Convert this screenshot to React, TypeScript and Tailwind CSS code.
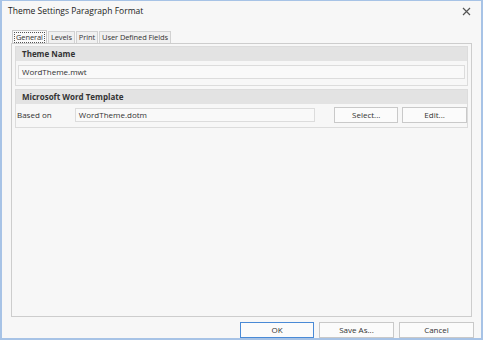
import React from 'react';

const font = { fontFamily: '"Open Sans", "Liberation Sans", sans-serif' };

const GroupHeader: React.FC<{ title: string }> = ({ title }) => (
  <div className="h-[14px] bg-[#e3e3e3] pl-[6px] flex items-center text-[8px] font-bold text-[#333]">{title}</div>
);

const Button: React.FC<{ label: string; primary?: boolean; className?: string }> = ({ label, primary, className }) => (
  <div
    className={`h-[16px] flex items-center justify-center text-[8px] text-[#333] bg-[#fbfbfb] border ${
      primary ? 'border-[#4a8ad6]' : 'border-[#c9c9c9]'
    } ${className ?? ''}`}
  >
    {label}
  </div>
);

export default function App() {
  return (
    <div className="w-[483px] h-[342px] bg-white overflow-hidden" style={font}>
      <div className="w-[483px] h-[340px] bg-[#f7f7f7] border-x-2 border-b-2 border-t border-[#a7c3e6] flex flex-col">
        {/* Title bar */}
        <div className="h-[21px] flex items-center justify-between pl-[6px] pr-[10px]">
          <span className="text-[8.5px] text-[#222]">Theme Settings Paragraph Format</span>
          <svg width="9" height="9" viewBox="0 0 9 9" className="stroke-[#555]">
            <path d="M1 1L8 8M8 1L1 8" strokeWidth="1.2" />
          </svg>
        </div>

        {/* Tabs */}
        <div className="flex ml-[10px] mt-[8px] h-[13px] items-end text-[7.5px] text-[#333] tracking-[-0.1px]">
          <div className="h-[13px] px-[1px] border border-b-0 border-[#c8c8c8] bg-[#fafafa] flex items-center">
            <span className="border border-dotted border-[#555] px-[1px] leading-[9px]">General</span>
          </div>
          <div className="h-[12px] ml-[1px] px-[2px] border border-b-0 border-[#d2d2d2] bg-[#f0f0f0] flex items-center">Levels</div>
          <div className="h-[12px] ml-[1px] px-[2px] border border-b-0 border-[#d2d2d2] bg-[#f0f0f0] flex items-center">Print</div>
          <div className="h-[12px] ml-[1px] px-[2px] border border-b-0 border-[#d2d2d2] bg-[#f0f0f0] flex items-center">User Defined Fields</div>
        </div>

        {/* Tab panel */}
        <div className="mx-[9px] h-[274px] border border-[#cdcdcd] bg-[#f7f7f7] px-[3px] pt-[2px] flex flex-col gap-[3px]">
          <div className="border border-[#dcdcdc] pb-[6px]">
            <GroupHeader title="Theme Name" />
            <div className="mx-[2px] mt-[4px] h-[14px] border border-[#dcdcdc] bg-[#f9f9f9] pl-[3px] flex items-center text-[8px] text-[#333]">
              WordTheme.mwt
            </div>
          </div>
          <div className="border border-[#dcdcdc] pb-[4px]">
            <GroupHeader title="Microsoft Word Template" />
            <div className="flex items-center mt-[3px] text-[8px] text-[#333]">
              <span className="w-[59px] pl-[1px]">Based on</span>
              <div className="w-[241px] h-[14px] border border-[#dcdcdc] bg-[#f9f9f9] pl-[3px] flex items-center">WordTheme.dotm</div>
              <Button label="Select..." className="w-[64px] ml-[19px]" />
              <Button label="Edit..." className="w-[65px] ml-[4px]" />
            </div>
          </div>
        </div>

        {/* Footer buttons */}
        <div className="flex justify-end gap-[5px] pr-[7px] mt-[5px]">
          <Button label="OK" primary className="w-[74px]" />
          <Button label="Save As..." className="w-[75px]" />
          <Button label="Cancel" className="w-[75px]" />
        </div>
      </div>
    </div>
  );
}
